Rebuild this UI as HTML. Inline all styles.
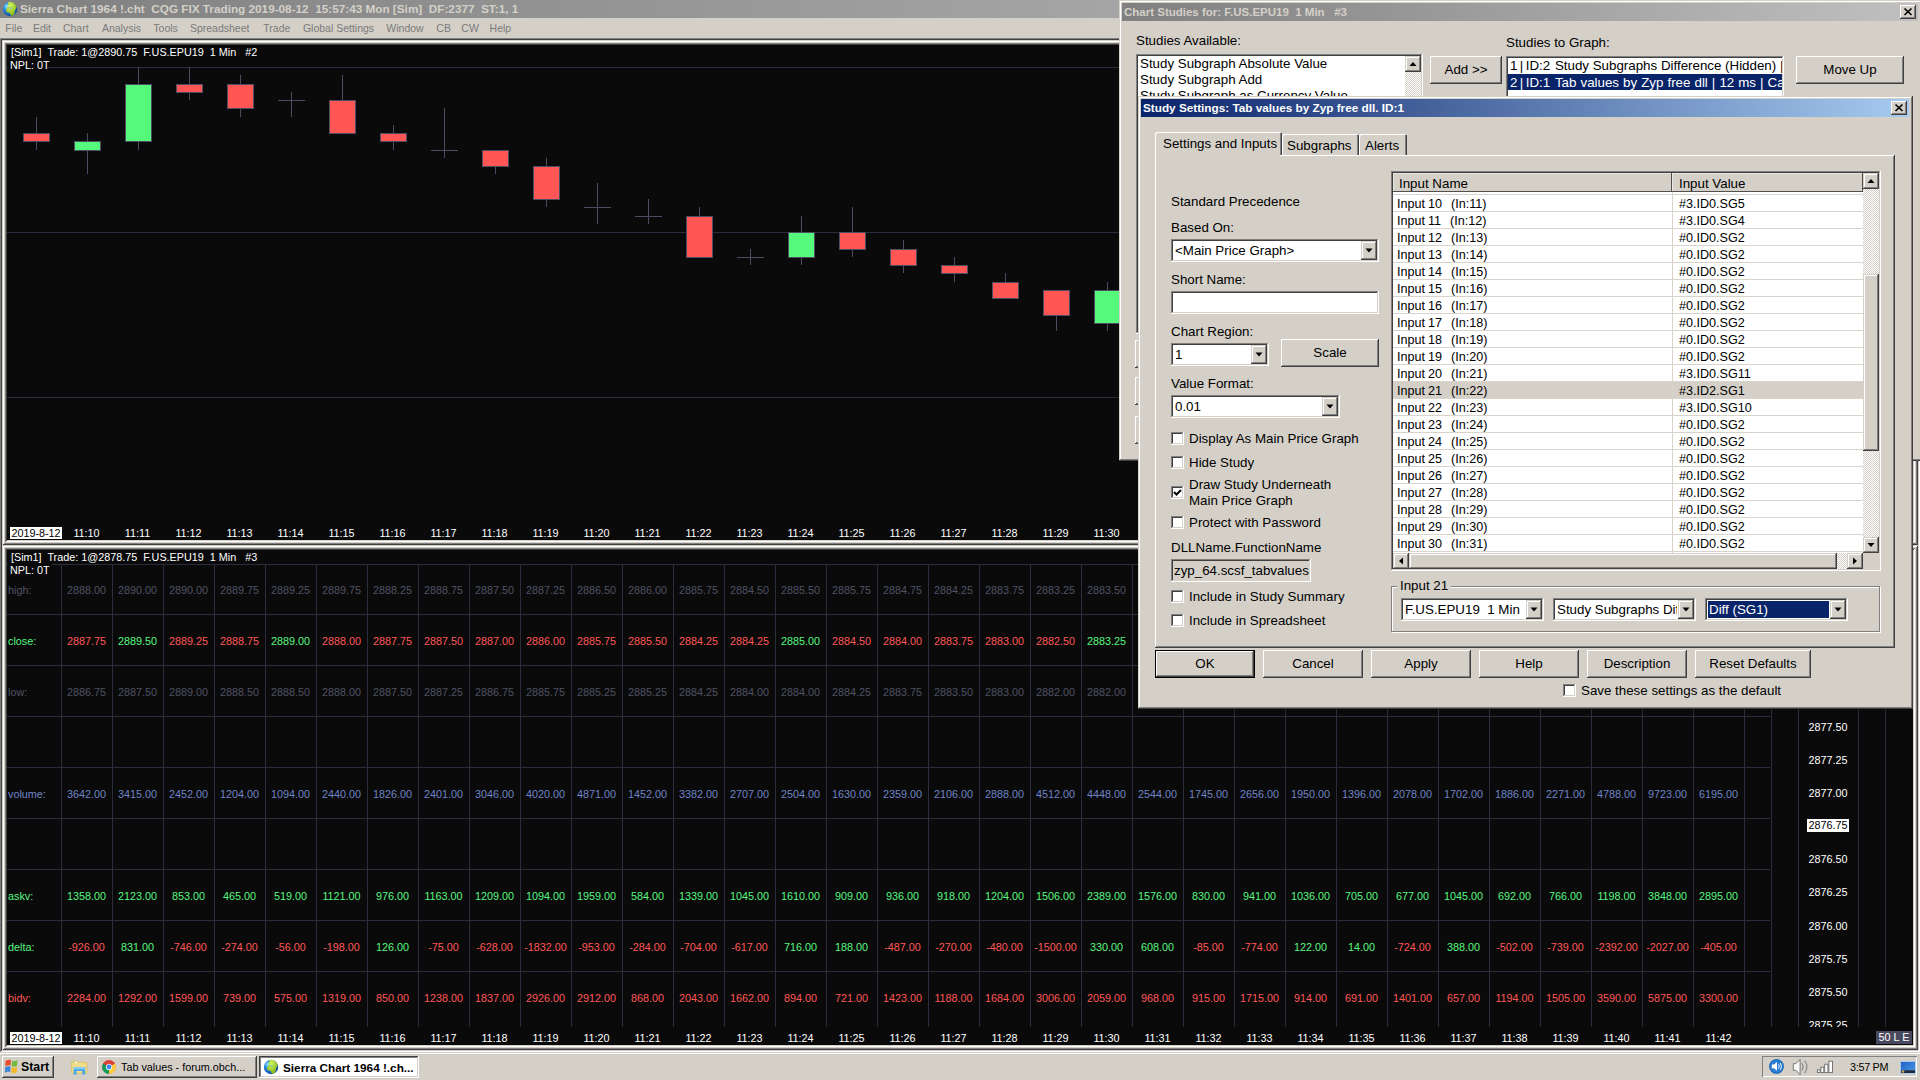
<!DOCTYPE html><html><head><meta charset="utf-8"><title>Sierra Chart</title><style>
*{box-sizing:border-box;margin:0;padding:0}
html,body{width:1920px;height:1080px;overflow:hidden;background:#d4d0c8}
body{position:relative;font-family:"Liberation Sans",sans-serif;font-size:13.33px;color:#000}
.a{position:absolute;white-space:pre;line-height:1}
.t{position:absolute;white-space:pre;font-size:10.8px;line-height:12px;height:12px}
.c{position:absolute;white-space:pre;font-size:10.8px;line-height:12px;height:12px;width:51px;text-align:center}
.d{position:absolute;white-space:pre;font-size:13.33px;line-height:18px;height:17px}
.raised{position:absolute;background:#d4d0c8;box-shadow:inset -1px -1px #404040,inset 1px 1px #fff,inset -2px -2px #808080,inset 2px 2px #d4d0c8}
.sunken{position:absolute;background:#fff;box-shadow:inset -1px -1px #fff,inset 1px 1px #808080,inset -2px -2px #d4d0c8,inset 2px 2px #404040}
.btn{position:absolute;background:#d4d0c8;box-shadow:inset -1px -1px #404040,inset 1px 1px #fff,inset -2px -2px #808080,inset 2px 2px #d4d0c8;text-align:center;font-size:13.33px;white-space:pre}
.win{position:absolute;background:#d4d0c8;box-shadow:inset -1px -1px #404040,inset 1px 1px #d4d0c8,inset -2px -2px #808080,inset 2px 2px #fff}
.cb{position:absolute;width:13px;height:13px;background:#fff;box-shadow:inset -1px -1px #fff,inset 1px 1px #808080,inset -2px -2px #d4d0c8,inset 2px 2px #404040}
.dither{background-image:conic-gradient(#fff 25%,#d4d0c8 0 50%,#fff 0 75%,#d4d0c8 0);background-size:2px 2px}
.g{color:#58f680}.r{color:#ff5858}.k{color:#505264}.v{color:#7084c8}.w{color:#fff}
</style></head><body>
<div class="a" style="left:0;top:0;width:1920px;height:18px;background:linear-gradient(90deg,#808080,#c0c0c0)"></div>
<svg class="a" style="left:2px;top:1px" width="16" height="16" viewBox="0 0 16 16"><defs><radialGradient id="gl" cx="30%" cy="32%" r="75%"><stop offset="0" stop-color="#9fe8ff"/><stop offset=".35" stop-color="#2a8ae0"/><stop offset="1" stop-color="#0a44a0"/></radialGradient><radialGradient id="gg" cx="40%" cy="30%" r="80%"><stop offset="0" stop-color="#d4f860"/><stop offset=".5" stop-color="#a4d030"/><stop offset="1" stop-color="#78a818"/></radialGradient><clipPath id="gc"><circle cx="8" cy="8" r="7.200"/></clipPath></defs><circle cx="8" cy="8" r="7.200" fill="url(#gl)"/><g clip-path="url(#gc)"><path d="M7.400.5L10.900.9 13.800 3.200 14.900 5.900 14 7.300 13 9.800 12.600 12.300 11.300 14.400 9.250 15 8.200 13.600 7.800 11.900 4.900 11.300 3.800 9.400 4.900 7.300 6.300 5.900 5.100 4.800 6.750 2.750 5.500 1.500z" fill="url(#gg)"/><path d="M6.500 6.300l3.300.3.300 1.200-1.300.3-.8-.9-1.300.1z" fill="#5fb8c8" opacity=".8"/></g></svg>
<div class="a" style="left:20px;top:2px;font-weight:bold;font-size:11.75px;line-height:14px;color:#d4d0c8">Sierra Chart 1964 !.cht  CQG FIX Trading 2019-08-12  15:57:43 Mon [Sim]  DF:2377  ST:1, 1</div>
<div class="a" style="left:0;top:18px;width:1920px;height:20px;background:#d4d0c8"></div>
<div class="t" style="left:5.3px;top:22px;color:#7a7a7a;font-size:10.5px">File</div>
<div class="t" style="left:32.9px;top:22px;color:#7a7a7a;font-size:10.5px">Edit</div>
<div class="t" style="left:62.9px;top:22px;color:#7a7a7a;font-size:10.5px">Chart</div>
<div class="t" style="left:101.9px;top:22px;color:#7a7a7a;font-size:10.5px">Analysis</div>
<div class="t" style="left:153.3px;top:22px;color:#7a7a7a;font-size:10.5px">Tools</div>
<div class="t" style="left:189.9px;top:22px;color:#7a7a7a;font-size:10.5px">Spreadsheet</div>
<div class="t" style="left:263.3px;top:22px;color:#7a7a7a;font-size:10.5px">Trade</div>
<div class="t" style="left:302.9px;top:22px;color:#7a7a7a;font-size:10.5px">Global Settings</div>
<div class="t" style="left:386.3px;top:22px;color:#7a7a7a;font-size:10.5px">Window</div>
<div class="t" style="left:436.3px;top:22px;color:#7a7a7a;font-size:10.5px">CB</div>
<div class="t" style="left:461.3px;top:22px;color:#7a7a7a;font-size:10.5px">CW</div>
<div class="t" style="left:489.6px;top:22px;color:#7a7a7a;font-size:10.5px">Help</div>
<div class="a" style="left:0;top:38px;width:1920px;height:1014px;background:#808080;box-shadow:inset 1px 1px #808080,inset -1px -1px #fff,inset 2px 2px #404040,inset -2px -2px #d4d0c8"></div>
<div class="a" style="left:2px;top:40px;width:1916px;height:505px;background:#0a0a0a;box-shadow:inset 1px 1px #d4d0c8,inset -1px -1px #404040,inset 2px 2px #fff,inset -2px -2px #808080,inset 3px 3px #d4d0c8,inset -3px -3px #d4d0c8,inset 4px 4px #808080,inset -4px -4px #fff,inset 5px 5px #404040,inset -5px -5px #d4d0c8"></div>
<svg class="a" style="left:0;top:0" width="1920" height="545" viewBox="0 0 1920 545" shape-rendering="crispEdges"><rect x="7" y="67" width="1906" height="1" fill="#2c2c3c"/><rect x="7" y="232" width="1906" height="1" fill="#2c2c3c"/><rect x="7" y="397" width="1906" height="1" fill="#2c2c3c"/><rect x="8" y="46" width="40" height="26" fill="#0a0a0a"/><rect x="36" y="117" width="1" height="33" fill="#4c4c62"/><rect x="23" y="133" width="27" height="9" fill="#4c4c62"/><rect x="24" y="134" width="25" height="7" fill="#ff5555"/><rect x="87" y="133" width="1" height="41" fill="#4c4c62"/><rect x="74" y="141" width="27" height="10" fill="#4c4c62"/><rect x="75" y="142" width="25" height="8" fill="#55f97c"/><rect x="138" y="67" width="1" height="83" fill="#4c4c62"/><rect x="125" y="84" width="27" height="58" fill="#4c4c62"/><rect x="126" y="85" width="25" height="56" fill="#55f97c"/><rect x="189" y="67" width="1" height="33" fill="#4c4c62"/><rect x="176" y="84" width="27" height="9" fill="#4c4c62"/><rect x="177" y="85" width="25" height="7" fill="#ff5555"/><rect x="240" y="75" width="1" height="42" fill="#4c4c62"/><rect x="227" y="84" width="27" height="25" fill="#4c4c62"/><rect x="228" y="85" width="25" height="23" fill="#ff5555"/><rect x="291" y="92" width="1" height="25" fill="#4c4c62"/><rect x="278" y="100" width="27" height="1" fill="#4c4c62"/><rect x="342" y="75" width="1" height="58" fill="#4c4c62"/><rect x="329" y="100" width="27" height="34" fill="#4c4c62"/><rect x="330" y="101" width="25" height="32" fill="#ff5555"/><rect x="393" y="125" width="1" height="25" fill="#4c4c62"/><rect x="380" y="133" width="27" height="9" fill="#4c4c62"/><rect x="381" y="134" width="25" height="7" fill="#ff5555"/><rect x="444" y="108" width="1" height="50" fill="#4c4c62"/><rect x="431" y="150" width="27" height="1" fill="#4c4c62"/><rect x="495" y="150" width="1" height="24" fill="#4c4c62"/><rect x="482" y="150" width="27" height="17" fill="#4c4c62"/><rect x="483" y="151" width="25" height="15" fill="#ff5555"/><rect x="546" y="158" width="1" height="49" fill="#4c4c62"/><rect x="533" y="166" width="27" height="34" fill="#4c4c62"/><rect x="534" y="167" width="25" height="32" fill="#ff5555"/><rect x="597" y="183" width="1" height="41" fill="#4c4c62"/><rect x="584" y="207" width="27" height="1" fill="#4c4c62"/><rect x="648" y="199" width="1" height="25" fill="#4c4c62"/><rect x="635" y="216" width="27" height="1" fill="#4c4c62"/><rect x="699" y="207" width="1" height="50" fill="#4c4c62"/><rect x="686" y="216" width="27" height="42" fill="#4c4c62"/><rect x="687" y="217" width="25" height="40" fill="#ff5555"/><rect x="750" y="249" width="1" height="16" fill="#4c4c62"/><rect x="737" y="257" width="27" height="1" fill="#4c4c62"/><rect x="801" y="216" width="1" height="49" fill="#4c4c62"/><rect x="788" y="232" width="27" height="26" fill="#4c4c62"/><rect x="789" y="233" width="25" height="24" fill="#55f97c"/><rect x="852" y="207" width="1" height="50" fill="#4c4c62"/><rect x="839" y="232" width="27" height="18" fill="#4c4c62"/><rect x="840" y="233" width="25" height="16" fill="#ff5555"/><rect x="903" y="240" width="1" height="33" fill="#4c4c62"/><rect x="890" y="249" width="27" height="17" fill="#4c4c62"/><rect x="891" y="250" width="25" height="15" fill="#ff5555"/><rect x="954" y="257" width="1" height="25" fill="#4c4c62"/><rect x="941" y="265" width="27" height="9" fill="#4c4c62"/><rect x="942" y="266" width="25" height="7" fill="#ff5555"/><rect x="1005" y="273" width="1" height="25" fill="#4c4c62"/><rect x="992" y="282" width="27" height="17" fill="#4c4c62"/><rect x="993" y="283" width="25" height="15" fill="#ff5555"/><rect x="1056" y="290" width="1" height="41" fill="#4c4c62"/><rect x="1043" y="290" width="27" height="26" fill="#4c4c62"/><rect x="1044" y="291" width="25" height="24" fill="#ff5555"/><rect x="1107" y="282" width="1" height="49" fill="#4c4c62"/><rect x="1094" y="290" width="27" height="34" fill="#4c4c62"/><rect x="1095" y="291" width="25" height="32" fill="#55f97c"/></svg>
<div class="t w" style="left:11px;top:46px">[Sim1]  Trade: 1@2890.75  F.US.EPU19  1 Min   #2</div>
<div class="t w" style="left:10px;top:59px">NPL: 0T</div>
<div class="t" style="left:10px;top:527px;width:52px;height:12px;background:#fff;color:#000;text-align:center;line-height:12px">2019-8-12</div>
<div class="c w" style="left:61px;top:527px">11:10</div>
<div class="c w" style="left:112px;top:527px">11:11</div>
<div class="c w" style="left:163px;top:527px">11:12</div>
<div class="c w" style="left:214px;top:527px">11:13</div>
<div class="c w" style="left:265px;top:527px">11:14</div>
<div class="c w" style="left:316px;top:527px">11:15</div>
<div class="c w" style="left:367px;top:527px">11:16</div>
<div class="c w" style="left:418px;top:527px">11:17</div>
<div class="c w" style="left:469px;top:527px">11:18</div>
<div class="c w" style="left:520px;top:527px">11:19</div>
<div class="c w" style="left:571px;top:527px">11:20</div>
<div class="c w" style="left:622px;top:527px">11:21</div>
<div class="c w" style="left:673px;top:527px">11:22</div>
<div class="c w" style="left:724px;top:527px">11:23</div>
<div class="c w" style="left:775px;top:527px">11:24</div>
<div class="c w" style="left:826px;top:527px">11:25</div>
<div class="c w" style="left:877px;top:527px">11:26</div>
<div class="c w" style="left:928px;top:527px">11:27</div>
<div class="c w" style="left:979px;top:527px">11:28</div>
<div class="c w" style="left:1030px;top:527px">11:29</div>
<div class="c w" style="left:1081px;top:527px">11:30</div>
<div class="a" style="left:2px;top:545px;width:1916px;height:505px;background:#0a0a0a;box-shadow:inset 1px 1px #d4d0c8,inset -1px -1px #404040,inset 2px 2px #fff,inset -2px -2px #808080,inset 3px 3px #d4d0c8,inset -3px -3px #d4d0c8,inset 4px 4px #808080,inset -4px -4px #fff,inset 5px 5px #404040,inset -5px -5px #d4d0c8"></div>
<svg class="a" style="left:0;top:545px" width="1920" height="506" viewBox="0 545 1920 506" shape-rendering="crispEdges"><rect x="7" y="564" width="1763" height="1" fill="#2c2c3c"/><rect x="7" y="614" width="1763" height="1" fill="#2c2c3c"/><rect x="7" y="665" width="1763" height="1" fill="#2c2c3c"/><rect x="7" y="716" width="1763" height="1" fill="#2c2c3c"/><rect x="7" y="767" width="1763" height="1" fill="#2c2c3c"/><rect x="7" y="818" width="1763" height="1" fill="#2c2c3c"/><rect x="7" y="869" width="1763" height="1" fill="#2c2c3c"/><rect x="7" y="920" width="1763" height="1" fill="#2c2c3c"/><rect x="7" y="971" width="1763" height="1" fill="#2c2c3c"/><rect x="61" y="564" width="1" height="463" fill="#2c2c3c"/><rect x="112" y="564" width="1" height="463" fill="#2c2c3c"/><rect x="163" y="564" width="1" height="463" fill="#2c2c3c"/><rect x="214" y="564" width="1" height="463" fill="#2c2c3c"/><rect x="265" y="564" width="1" height="463" fill="#2c2c3c"/><rect x="316" y="564" width="1" height="463" fill="#2c2c3c"/><rect x="367" y="564" width="1" height="463" fill="#2c2c3c"/><rect x="418" y="564" width="1" height="463" fill="#2c2c3c"/><rect x="469" y="564" width="1" height="463" fill="#2c2c3c"/><rect x="520" y="564" width="1" height="463" fill="#2c2c3c"/><rect x="571" y="564" width="1" height="463" fill="#2c2c3c"/><rect x="622" y="564" width="1" height="463" fill="#2c2c3c"/><rect x="673" y="564" width="1" height="463" fill="#2c2c3c"/><rect x="724" y="564" width="1" height="463" fill="#2c2c3c"/><rect x="775" y="564" width="1" height="463" fill="#2c2c3c"/><rect x="826" y="564" width="1" height="463" fill="#2c2c3c"/><rect x="877" y="564" width="1" height="463" fill="#2c2c3c"/><rect x="928" y="564" width="1" height="463" fill="#2c2c3c"/><rect x="979" y="564" width="1" height="463" fill="#2c2c3c"/><rect x="1030" y="564" width="1" height="463" fill="#2c2c3c"/><rect x="1081" y="564" width="1" height="463" fill="#2c2c3c"/><rect x="1132" y="564" width="1" height="463" fill="#2c2c3c"/><rect x="1183" y="564" width="1" height="463" fill="#2c2c3c"/><rect x="1234" y="564" width="1" height="463" fill="#2c2c3c"/><rect x="1285" y="564" width="1" height="463" fill="#2c2c3c"/><rect x="1336" y="564" width="1" height="463" fill="#2c2c3c"/><rect x="1387" y="564" width="1" height="463" fill="#2c2c3c"/><rect x="1438" y="564" width="1" height="463" fill="#2c2c3c"/><rect x="1489" y="564" width="1" height="463" fill="#2c2c3c"/><rect x="1540" y="564" width="1" height="463" fill="#2c2c3c"/><rect x="1591" y="564" width="1" height="463" fill="#2c2c3c"/><rect x="1642" y="564" width="1" height="463" fill="#2c2c3c"/><rect x="1693" y="564" width="1" height="463" fill="#2c2c3c"/><rect x="1744" y="564" width="1" height="463" fill="#2c2c3c"/><rect x="1771" y="564" width="1" height="463" fill="#2c2c3c"/><rect x="1798" y="564" width="1" height="463" fill="#2c2c3c"/><rect x="1858" y="564" width="1" height="463" fill="#2c2c3c"/><rect x="1885" y="564" width="1" height="463" fill="#2c2c3c"/><rect x="8" y="552" width="44" height="26" fill="#0a0a0a"/></svg>
<div class="t w" style="left:11px;top:551px">[Sim1]  Trade: 1@2878.75  F.US.EPU19  1 Min   #3</div>
<div class="t w" style="left:10px;top:564px">NPL: 0T</div>
<div class="t k" style="left:8px;top:584px">high:</div>
<div class="t g" style="left:8px;top:635px">close:</div>
<div class="t k" style="left:8px;top:686px">low:</div>
<div class="t v" style="left:8px;top:788px">volume:</div>
<div class="t g" style="left:8px;top:890px">askv:</div>
<div class="t g" style="left:8px;top:941px">delta:</div>
<div class="t r" style="left:8px;top:992px">bidv:</div>
<div class="c k" style="left:61px;top:584px">2888.00</div>
<div class="c k" style="left:112px;top:584px">2890.00</div>
<div class="c k" style="left:163px;top:584px">2890.00</div>
<div class="c k" style="left:214px;top:584px">2889.75</div>
<div class="c k" style="left:265px;top:584px">2889.25</div>
<div class="c k" style="left:316px;top:584px">2889.75</div>
<div class="c k" style="left:367px;top:584px">2888.25</div>
<div class="c k" style="left:418px;top:584px">2888.75</div>
<div class="c k" style="left:469px;top:584px">2887.50</div>
<div class="c k" style="left:520px;top:584px">2887.25</div>
<div class="c k" style="left:571px;top:584px">2886.50</div>
<div class="c k" style="left:622px;top:584px">2886.00</div>
<div class="c k" style="left:673px;top:584px">2885.75</div>
<div class="c k" style="left:724px;top:584px">2884.50</div>
<div class="c k" style="left:775px;top:584px">2885.50</div>
<div class="c k" style="left:826px;top:584px">2885.75</div>
<div class="c k" style="left:877px;top:584px">2884.75</div>
<div class="c k" style="left:928px;top:584px">2884.25</div>
<div class="c k" style="left:979px;top:584px">2883.75</div>
<div class="c k" style="left:1030px;top:584px">2883.25</div>
<div class="c k" style="left:1081px;top:584px">2883.50</div>
<div class="c r" style="left:61px;top:635px">2887.75</div>
<div class="c g" style="left:112px;top:635px">2889.50</div>
<div class="c r" style="left:163px;top:635px">2889.25</div>
<div class="c r" style="left:214px;top:635px">2888.75</div>
<div class="c g" style="left:265px;top:635px">2889.00</div>
<div class="c r" style="left:316px;top:635px">2888.00</div>
<div class="c r" style="left:367px;top:635px">2887.75</div>
<div class="c r" style="left:418px;top:635px">2887.50</div>
<div class="c r" style="left:469px;top:635px">2887.00</div>
<div class="c r" style="left:520px;top:635px">2886.00</div>
<div class="c r" style="left:571px;top:635px">2885.75</div>
<div class="c r" style="left:622px;top:635px">2885.50</div>
<div class="c r" style="left:673px;top:635px">2884.25</div>
<div class="c r" style="left:724px;top:635px">2884.25</div>
<div class="c g" style="left:775px;top:635px">2885.00</div>
<div class="c r" style="left:826px;top:635px">2884.50</div>
<div class="c r" style="left:877px;top:635px">2884.00</div>
<div class="c r" style="left:928px;top:635px">2883.75</div>
<div class="c r" style="left:979px;top:635px">2883.00</div>
<div class="c r" style="left:1030px;top:635px">2882.50</div>
<div class="c g" style="left:1081px;top:635px">2883.25</div>
<div class="c k" style="left:61px;top:686px">2886.75</div>
<div class="c k" style="left:112px;top:686px">2887.50</div>
<div class="c k" style="left:163px;top:686px">2889.00</div>
<div class="c k" style="left:214px;top:686px">2888.50</div>
<div class="c k" style="left:265px;top:686px">2888.50</div>
<div class="c k" style="left:316px;top:686px">2888.00</div>
<div class="c k" style="left:367px;top:686px">2887.50</div>
<div class="c k" style="left:418px;top:686px">2887.25</div>
<div class="c k" style="left:469px;top:686px">2886.75</div>
<div class="c k" style="left:520px;top:686px">2885.75</div>
<div class="c k" style="left:571px;top:686px">2885.25</div>
<div class="c k" style="left:622px;top:686px">2885.25</div>
<div class="c k" style="left:673px;top:686px">2884.25</div>
<div class="c k" style="left:724px;top:686px">2884.00</div>
<div class="c k" style="left:775px;top:686px">2884.00</div>
<div class="c k" style="left:826px;top:686px">2884.25</div>
<div class="c k" style="left:877px;top:686px">2883.75</div>
<div class="c k" style="left:928px;top:686px">2883.50</div>
<div class="c k" style="left:979px;top:686px">2883.00</div>
<div class="c k" style="left:1030px;top:686px">2882.00</div>
<div class="c k" style="left:1081px;top:686px">2882.00</div>
<div class="c v" style="left:61px;top:788px">3642.00</div>
<div class="c v" style="left:112px;top:788px">3415.00</div>
<div class="c v" style="left:163px;top:788px">2452.00</div>
<div class="c v" style="left:214px;top:788px">1204.00</div>
<div class="c v" style="left:265px;top:788px">1094.00</div>
<div class="c v" style="left:316px;top:788px">2440.00</div>
<div class="c v" style="left:367px;top:788px">1826.00</div>
<div class="c v" style="left:418px;top:788px">2401.00</div>
<div class="c v" style="left:469px;top:788px">3046.00</div>
<div class="c v" style="left:520px;top:788px">4020.00</div>
<div class="c v" style="left:571px;top:788px">4871.00</div>
<div class="c v" style="left:622px;top:788px">1452.00</div>
<div class="c v" style="left:673px;top:788px">3382.00</div>
<div class="c v" style="left:724px;top:788px">2707.00</div>
<div class="c v" style="left:775px;top:788px">2504.00</div>
<div class="c v" style="left:826px;top:788px">1630.00</div>
<div class="c v" style="left:877px;top:788px">2359.00</div>
<div class="c v" style="left:928px;top:788px">2106.00</div>
<div class="c v" style="left:979px;top:788px">2888.00</div>
<div class="c v" style="left:1030px;top:788px">4512.00</div>
<div class="c v" style="left:1081px;top:788px">4448.00</div>
<div class="c v" style="left:1132px;top:788px">2544.00</div>
<div class="c v" style="left:1183px;top:788px">1745.00</div>
<div class="c v" style="left:1234px;top:788px">2656.00</div>
<div class="c v" style="left:1285px;top:788px">1950.00</div>
<div class="c v" style="left:1336px;top:788px">1396.00</div>
<div class="c v" style="left:1387px;top:788px">2078.00</div>
<div class="c v" style="left:1438px;top:788px">1702.00</div>
<div class="c v" style="left:1489px;top:788px">1886.00</div>
<div class="c v" style="left:1540px;top:788px">2271.00</div>
<div class="c v" style="left:1591px;top:788px">4788.00</div>
<div class="c v" style="left:1642px;top:788px">9723.00</div>
<div class="c v" style="left:1693px;top:788px">6195.00</div>
<div class="c g" style="left:61px;top:890px">1358.00</div>
<div class="c r" style="left:61px;top:941px">-926.00</div>
<div class="c r" style="left:61px;top:992px">2284.00</div>
<div class="c g" style="left:112px;top:890px">2123.00</div>
<div class="c g" style="left:112px;top:941px">831.00</div>
<div class="c r" style="left:112px;top:992px">1292.00</div>
<div class="c g" style="left:163px;top:890px">853.00</div>
<div class="c r" style="left:163px;top:941px">-746.00</div>
<div class="c r" style="left:163px;top:992px">1599.00</div>
<div class="c g" style="left:214px;top:890px">465.00</div>
<div class="c r" style="left:214px;top:941px">-274.00</div>
<div class="c r" style="left:214px;top:992px">739.00</div>
<div class="c g" style="left:265px;top:890px">519.00</div>
<div class="c r" style="left:265px;top:941px">-56.00</div>
<div class="c r" style="left:265px;top:992px">575.00</div>
<div class="c g" style="left:316px;top:890px">1121.00</div>
<div class="c r" style="left:316px;top:941px">-198.00</div>
<div class="c r" style="left:316px;top:992px">1319.00</div>
<div class="c g" style="left:367px;top:890px">976.00</div>
<div class="c g" style="left:367px;top:941px">126.00</div>
<div class="c r" style="left:367px;top:992px">850.00</div>
<div class="c g" style="left:418px;top:890px">1163.00</div>
<div class="c r" style="left:418px;top:941px">-75.00</div>
<div class="c r" style="left:418px;top:992px">1238.00</div>
<div class="c g" style="left:469px;top:890px">1209.00</div>
<div class="c r" style="left:469px;top:941px">-628.00</div>
<div class="c r" style="left:469px;top:992px">1837.00</div>
<div class="c g" style="left:520px;top:890px">1094.00</div>
<div class="c r" style="left:520px;top:941px">-1832.00</div>
<div class="c r" style="left:520px;top:992px">2926.00</div>
<div class="c g" style="left:571px;top:890px">1959.00</div>
<div class="c r" style="left:571px;top:941px">-953.00</div>
<div class="c r" style="left:571px;top:992px">2912.00</div>
<div class="c g" style="left:622px;top:890px">584.00</div>
<div class="c r" style="left:622px;top:941px">-284.00</div>
<div class="c r" style="left:622px;top:992px">868.00</div>
<div class="c g" style="left:673px;top:890px">1339.00</div>
<div class="c r" style="left:673px;top:941px">-704.00</div>
<div class="c r" style="left:673px;top:992px">2043.00</div>
<div class="c g" style="left:724px;top:890px">1045.00</div>
<div class="c r" style="left:724px;top:941px">-617.00</div>
<div class="c r" style="left:724px;top:992px">1662.00</div>
<div class="c g" style="left:775px;top:890px">1610.00</div>
<div class="c g" style="left:775px;top:941px">716.00</div>
<div class="c r" style="left:775px;top:992px">894.00</div>
<div class="c g" style="left:826px;top:890px">909.00</div>
<div class="c g" style="left:826px;top:941px">188.00</div>
<div class="c r" style="left:826px;top:992px">721.00</div>
<div class="c g" style="left:877px;top:890px">936.00</div>
<div class="c r" style="left:877px;top:941px">-487.00</div>
<div class="c r" style="left:877px;top:992px">1423.00</div>
<div class="c g" style="left:928px;top:890px">918.00</div>
<div class="c r" style="left:928px;top:941px">-270.00</div>
<div class="c r" style="left:928px;top:992px">1188.00</div>
<div class="c g" style="left:979px;top:890px">1204.00</div>
<div class="c r" style="left:979px;top:941px">-480.00</div>
<div class="c r" style="left:979px;top:992px">1684.00</div>
<div class="c g" style="left:1030px;top:890px">1506.00</div>
<div class="c r" style="left:1030px;top:941px">-1500.00</div>
<div class="c r" style="left:1030px;top:992px">3006.00</div>
<div class="c g" style="left:1081px;top:890px">2389.00</div>
<div class="c g" style="left:1081px;top:941px">330.00</div>
<div class="c r" style="left:1081px;top:992px">2059.00</div>
<div class="c g" style="left:1132px;top:890px">1576.00</div>
<div class="c g" style="left:1132px;top:941px">608.00</div>
<div class="c r" style="left:1132px;top:992px">968.00</div>
<div class="c g" style="left:1183px;top:890px">830.00</div>
<div class="c r" style="left:1183px;top:941px">-85.00</div>
<div class="c r" style="left:1183px;top:992px">915.00</div>
<div class="c g" style="left:1234px;top:890px">941.00</div>
<div class="c r" style="left:1234px;top:941px">-774.00</div>
<div class="c r" style="left:1234px;top:992px">1715.00</div>
<div class="c g" style="left:1285px;top:890px">1036.00</div>
<div class="c g" style="left:1285px;top:941px">122.00</div>
<div class="c r" style="left:1285px;top:992px">914.00</div>
<div class="c g" style="left:1336px;top:890px">705.00</div>
<div class="c g" style="left:1336px;top:941px">14.00</div>
<div class="c r" style="left:1336px;top:992px">691.00</div>
<div class="c g" style="left:1387px;top:890px">677.00</div>
<div class="c r" style="left:1387px;top:941px">-724.00</div>
<div class="c r" style="left:1387px;top:992px">1401.00</div>
<div class="c g" style="left:1438px;top:890px">1045.00</div>
<div class="c g" style="left:1438px;top:941px">388.00</div>
<div class="c r" style="left:1438px;top:992px">657.00</div>
<div class="c g" style="left:1489px;top:890px">692.00</div>
<div class="c r" style="left:1489px;top:941px">-502.00</div>
<div class="c r" style="left:1489px;top:992px">1194.00</div>
<div class="c g" style="left:1540px;top:890px">766.00</div>
<div class="c r" style="left:1540px;top:941px">-739.00</div>
<div class="c r" style="left:1540px;top:992px">1505.00</div>
<div class="c g" style="left:1591px;top:890px">1198.00</div>
<div class="c r" style="left:1591px;top:941px">-2392.00</div>
<div class="c r" style="left:1591px;top:992px">3590.00</div>
<div class="c g" style="left:1642px;top:890px">3848.00</div>
<div class="c r" style="left:1642px;top:941px">-2027.00</div>
<div class="c r" style="left:1642px;top:992px">5875.00</div>
<div class="c g" style="left:1693px;top:890px">2895.00</div>
<div class="c r" style="left:1693px;top:941px">-405.00</div>
<div class="c r" style="left:1693px;top:992px">3300.00</div>
<div class="t" style="left:10px;top:1032px;width:52px;height:12px;background:#fff;color:#000;text-align:center;line-height:12px">2019-8-12</div>
<div class="c w" style="left:61px;top:1032px">11:10</div>
<div class="c w" style="left:112px;top:1032px">11:11</div>
<div class="c w" style="left:163px;top:1032px">11:12</div>
<div class="c w" style="left:214px;top:1032px">11:13</div>
<div class="c w" style="left:265px;top:1032px">11:14</div>
<div class="c w" style="left:316px;top:1032px">11:15</div>
<div class="c w" style="left:367px;top:1032px">11:16</div>
<div class="c w" style="left:418px;top:1032px">11:17</div>
<div class="c w" style="left:469px;top:1032px">11:18</div>
<div class="c w" style="left:520px;top:1032px">11:19</div>
<div class="c w" style="left:571px;top:1032px">11:20</div>
<div class="c w" style="left:622px;top:1032px">11:21</div>
<div class="c w" style="left:673px;top:1032px">11:22</div>
<div class="c w" style="left:724px;top:1032px">11:23</div>
<div class="c w" style="left:775px;top:1032px">11:24</div>
<div class="c w" style="left:826px;top:1032px">11:25</div>
<div class="c w" style="left:877px;top:1032px">11:26</div>
<div class="c w" style="left:928px;top:1032px">11:27</div>
<div class="c w" style="left:979px;top:1032px">11:28</div>
<div class="c w" style="left:1030px;top:1032px">11:29</div>
<div class="c w" style="left:1081px;top:1032px">11:30</div>
<div class="c w" style="left:1132px;top:1032px">11:31</div>
<div class="c w" style="left:1183px;top:1032px">11:32</div>
<div class="c w" style="left:1234px;top:1032px">11:33</div>
<div class="c w" style="left:1285px;top:1032px">11:34</div>
<div class="c w" style="left:1336px;top:1032px">11:35</div>
<div class="c w" style="left:1387px;top:1032px">11:36</div>
<div class="c w" style="left:1438px;top:1032px">11:37</div>
<div class="c w" style="left:1489px;top:1032px">11:38</div>
<div class="c w" style="left:1540px;top:1032px">11:39</div>
<div class="c w" style="left:1591px;top:1032px">11:40</div>
<div class="c w" style="left:1642px;top:1032px">11:41</div>
<div class="c w" style="left:1693px;top:1032px">11:42</div>
<div class="a" style="left:1800px;top:700px;width:58px;height:327px;overflow:hidden">
<div class="t w" style="left:7px;top:-12px;width:42px;text-align:center">2877.75</div>
<div class="t w" style="left:7px;top:21px;width:42px;text-align:center">2877.50</div>
<div class="t w" style="left:7px;top:54px;width:42px;text-align:center">2877.25</div>
<div class="t w" style="left:7px;top:87px;width:42px;text-align:center">2877.00</div>
<div class="t" style="left:7px;top:119px;width:42px;height:13px;line-height:13px;background:#fff;color:#000;text-align:center">2876.75</div>
<div class="t w" style="left:7px;top:153px;width:42px;text-align:center">2876.50</div>
<div class="t w" style="left:7px;top:186px;width:42px;text-align:center">2876.25</div>
<div class="t w" style="left:7px;top:220px;width:42px;text-align:center">2876.00</div>
<div class="t w" style="left:7px;top:253px;width:42px;text-align:center">2875.75</div>
<div class="t w" style="left:7px;top:286px;width:42px;text-align:center">2875.50</div>
<div class="t w" style="left:7px;top:319px;width:42px;text-align:center">2875.25</div>
</div>
<div class="t w" style="left:1876px;top:1031px;width:36px;height:13px;line-height:13px;background:#48485e;text-align:center">50 L E</div>
<div class="a" style="left:0;top:1052px;width:1920px;height:28px;background:#d4d0c8;border-top:1px solid #d4d0c8;box-shadow:inset 0 1px #fff"></div>
<div class="raised" style="left:2px;top:1056px;width:52px;height:22px"></div>
<svg class="a" style="left:4px;top:1058px" width="17" height="16" viewBox="0 0 17 16"><g transform="rotate(-8 8 8)"><path d="M2.300 2.200c1.800-1.100 3.700-1.100 5.400 0l-1 5.300c-1.800-1.100-3.600-1.100-5.400 0z" fill="#e8502c"/><path d="M8.700 2.800c1.800 1.100 3.700 1.100 5.500 0l-1 5.300c-1.800 1.100-3.700 1.100-5.500 0z" fill="#74b83e"/><path d="M1 8.600c1.800-1.100 3.700-1.100 5.400 0l-1 5.300c-1.800-1.100-3.600-1.100-5.400 0z" fill="#3f86dc"/><path d="M7.400 9.200c1.800 1.100 3.700 1.100 5.500 0l-1 5.300c-1.800 1.100-3.700 1.100-5.500 0z" fill="#f4b824"/></g></svg>
<div class="a" style="left:21px;top:1060px;font-weight:bold;font-size:12.3px;line-height:15px">Start</div>
<svg class="a" style="left:71px;top:1060px" width="17" height="16" viewBox="0 0 17 16"><path d="M.6 2.300Q.6 1.200 1.700 1.200H6.500L7.600 2.300H15.200Q16 2.300 16 3.100V12.500Q16 13.300 15.200 13.300H1.400Q.6 13.300.6 12.500z" fill="#f3dc8a" stroke="#d9b84e" stroke-width=".7"/><rect x="2" y="1.900" width="4" height=".9" fill="#fff"/><rect x="2" y="1.900" width="1.200" height=".9" fill="#4fc03a"/><path d="M2.600 7.200H14.200V14.600H11.300V10.900H5.600V14.600H2.600z" fill="#4aa8e8"/><path d="M2.600 7.200H14.200V9.200H2.600z" fill="#8ad0f6"/></svg>
<div class="raised" style="left:97px;top:1056px;width:160px;height:22px"></div>
<svg class="a" style="left:102px;top:1060px" width="14" height="14" viewBox="0 0 14 14"><circle cx="7" cy="7" r="6.800" fill="#db4437"/><path d="M7 7L1.100 3.600A6.800 6.800 0 0 0 7 13.800z" fill="#0f9d58"/><path d="M7 7L7 13.800A6.800 6.800 0 0 0 12.900 3.600z" fill="#ffcd40"/><path d="M7 7L12.900 3.600A6.800 6.800 0 0 0 1.100 3.600z" fill="#db4437"/><circle cx="7" cy="7" r="3.100" fill="#fff"/><circle cx="7" cy="7" r="2.400" fill="#4285f4"/></svg>
<div class="t" style="left:121px;top:1061px">Tab values - forum.obch...</div>
<div class="a" style="left:259px;top:1056px;width:160px;height:22px;background:#fff;box-shadow:inset -1px -1px #fff,inset 1px 1px #404040,inset -2px -2px #d4d0c8,inset 2px 2px #808080"></div>
<svg class="a" style="left:263px;top:1059px" width="16" height="16" viewBox="0 0 16 16"><circle cx="8" cy="8" r="7.200" fill="url(#gl)"/><g clip-path="url(#gc)"><path d="M7.400.5L10.900.9 13.800 3.200 14.900 5.900 14 7.300 13 9.800 12.600 12.300 11.300 14.400 9.250 15 8.200 13.600 7.800 11.900 4.900 11.300 3.800 9.400 4.900 7.300 6.300 5.900 5.100 4.800 6.750 2.750 5.500 1.500z" fill="url(#gg)"/><path d="M6.500 6.300l3.300.3.300 1.200-1.300.3-.8-.9-1.300.1z" fill="#5fb8c8" opacity=".8"/></g></svg>
<div class="a" style="left:283px;top:1061px;font-weight:bold;font-size:11.75px;line-height:14px">Sierra Chart 1964 !.ch...</div>
<div class="a" style="left:1762px;top:1056px;width:155px;height:21px;box-shadow:inset 1px 1px #808080,inset -1px -1px #fff"></div>
<svg class="a" style="left:1768px;top:1058px" width="70" height="18" viewBox="0 0 70 18"><circle cx="8.500" cy="8.400" r="7.400" fill="#1a66b8"/><circle cx="8.500" cy="8.400" r="6.300" fill="#2b7fd4"/><path d="M3.800 6.600h2.200l3-2.600v8.800l-3-2.600H3.800z" fill="#fff"/><path d="M10.600 6.400q1.300 2 0 4M12.300 5q2.500 3.400 0 6.800" stroke="#fff" stroke-width="1" fill="none"/><path d="M25.300 5.700h2.600l4.200-4.300v15.200l-4.200-4.300h-2.600z" fill="#fafafa" stroke="#6a6a6a" stroke-width=".9"/><path d="M33.800 5q2.300 3.700 0 7.500M36.600 2.500q4.600 6.300 0 12.600" stroke="#8a8a8a" stroke-width="1.200" fill="none"/><g fill="#fff" stroke="#6a6a6a" stroke-width=".9"><rect x="49.400" y="11.800" width="2.700" height="2.700"/><rect x="52.900" y="9.200" width="2.900" height="5.300"/><rect x="56.700" y="6.200" width="3.200" height="8.300"/><rect x="60.900" y="3.200" width="3.600" height="11.300"/></g></svg>
<div class="t" style="left:1850px;top:1061px;letter-spacing:-.28px">3:57 PM</div>
<svg class="a" style="left:1900px;top:1061px" width="16" height="13" viewBox="0 0 16 13"><defs><linearGradient id="mg" x1="0" y1="0" x2="1" y2="1"><stop offset="0" stop-color="#1d5fc4"/><stop offset="1" stop-color="#4f9be8"/></linearGradient></defs><rect x=".5" y=".5" width="15" height="12" fill="url(#mg)" stroke="#a8c8ee"/><rect x="1" y="9.300" width="14" height="2.700" fill="#222a3a"/><circle cx="3" cy="10.500" r="1.300" fill="#e8a030"/><circle cx="2.600" cy="10.100" r=".6" fill="#5fb0f0"/></svg>
<div class="win" style="left:1119px;top:0;width:803px;height:461px"></div>
<div class="a" style="left:1122px;top:3px;width:796px;height:18px;background:linear-gradient(90deg,#808080,#c0c0c0)"></div>
<div class="a" style="left:1124px;top:5px;font-weight:bold;font-size:11.5px;line-height:14px;color:#d4d0c8">Chart Studies for: F.US.EPU19  1 Min   #3</div>
<div class="raised" style="left:1900px;top:5px;width:16px;height:14px"></div>
<svg class="a" style="left:1900px;top:5px" width="16" height="14"><path d="M4.500 3.500l7 6.500M11.500 3.500l-7 6.500" stroke="#000" stroke-width="1.700" fill="none"/></svg>
<div class="d" style="left:1136px;top:32px">Studies Available:</div>
<div class="sunken" style="left:1136px;top:54px;width:287px;height:280px"></div>
<div class="d" style="left:1140px;top:55px">Study Subgraph Absolute Value</div>
<div class="d" style="left:1140px;top:71px">Study Subgraph Add</div>
<div class="d" style="left:1140px;top:87px">Study Subgraph as Currency Value</div>
<div class="a dither" style="left:1405px;top:56px;width:16px;height:276px"></div>
<div class="win" style="left:1405px;top:56px;width:16px;height:16px"></div>
<svg class="a" style="left:1405px;top:56px" width="16" height="16"><polygon points="4.5,10.0 11.5,10.0 8.0,6.0" fill="#000"/></svg>
<div class="btn" style="left:1430px;top:56px;width:72px;height:28px;line-height:27px">Add &gt;&gt;</div>
<div class="d" style="left:1506px;top:34px">Studies to Graph:</div>
<div class="sunken" style="left:1506px;top:56px;width:278px;height:200px"></div>
<div class="d" style="left:1510px;top:57px;width:272px;overflow:hidden"><span style="word-spacing:-1.3px">1 | ID:2  </span>Study Subgraphs Difference (Hidden) | </div>
<div class="d" style="left:1508px;top:74px;width:274px;height:16px;overflow:hidden;background:#0a246a;color:#fff;padding-left:2px"><span style="word-spacing:-1.3px">2 | ID:1  </span><span style="word-spacing:.35px">Tab values by Zyp free dll | 12 ms | Calc</span></div>
<div class="btn" style="left:1796px;top:56px;width:108px;height:28px;line-height:27px">Move Up</div>
<div class="raised" style="left:1135px;top:340px;width:60px;height:28px"></div>
<div class="raised" style="left:1135px;top:377px;width:60px;height:28px"></div>
<div class="raised" style="left:1135px;top:416px;width:60px;height:28px"></div>
<div class="win" style="left:1138px;top:96px;width:775px;height:613px"></div>
<div class="a" style="left:1141px;top:99px;width:768px;height:18px;background:linear-gradient(90deg,#0a246a,#a6caf0)"></div>
<div class="a" style="left:1143px;top:101px;font-weight:bold;font-size:11.75px;line-height:14px;color:#fff">Study Settings: Tab values by Zyp free dll. ID:1</div>
<div class="raised" style="left:1891px;top:101px;width:16px;height:14px"></div>
<svg class="a" style="left:1891px;top:101px" width="16" height="14"><path d="M4.500 3.500l7 6.500M11.500 3.500l-7 6.500" stroke="#000" stroke-width="1.700" fill="none"/></svg>
<div class="a" style="left:1155px;top:155px;width:740px;height:493px;background:#d4d0c8;box-shadow:inset -1px -1px #404040,inset 1px 1px #fff,inset -2px -2px #808080"></div>
<div class="a" style="left:1282px;top:134px;width:77px;height:21px;background:#d4d0c8;border-radius:2px 2px 0 0;box-shadow:inset 1px 1px #fff,inset -1px 0 #404040,inset -2px 0 #808080"></div>
<div class="d" style="left:1287px;top:137px">Subgraphs</div>
<div class="a" style="left:1359px;top:134px;width:48px;height:21px;background:#d4d0c8;border-radius:2px 2px 0 0;box-shadow:inset 1px 1px #fff,inset -1px 0 #404040,inset -2px 0 #808080"></div>
<div class="d" style="left:1365px;top:137px">Alerts</div>
<div class="a" style="left:1155px;top:132px;width:127px;height:23px;background:#d4d0c8;border-radius:2px 2px 0 0;box-shadow:inset 1px 1px #fff,inset -1px 0 #404040,inset -2px 0 #808080"></div>
<div class="d" style="left:1163px;top:135px">Settings and Inputs</div>
<div class="a" style="left:1156px;top:154px;width:124px;height:2px;background:#d4d0c8"></div>
<div class="d" style="left:1171px;top:193px">Standard Precedence</div>
<div class="d" style="left:1171px;top:219px">Based On:</div>
<div class="sunken" style="left:1171px;top:239px;width:208px;height:23px"></div>
<div class="win" style="left:1361px;top:241px;width:16px;height:19px"></div>
<svg class="a" style="left:1361px;top:241px" width="16" height="19"><polygon points="4.5,7.5 11.5,7.5 8.0,11.5" fill="#000"/></svg>
<div class="d" style="left:1175px;top:242px;width:185px;height:17px;line-height:18px;overflow:hidden">&lt;Main Price Graph&gt;</div>
<div class="d" style="left:1171px;top:271px">Short Name:</div>
<div class="sunken" style="left:1171px;top:291px;width:208px;height:23px"></div>
<div class="d" style="left:1171px;top:323px">Chart Region:</div>
<div class="sunken" style="left:1171px;top:343px;width:98px;height:23px"></div>
<div class="win" style="left:1251px;top:345px;width:16px;height:19px"></div>
<svg class="a" style="left:1251px;top:345px" width="16" height="19"><polygon points="4.5,7.5 11.5,7.5 8.0,11.5" fill="#000"/></svg>
<div class="d" style="left:1175px;top:346px;width:75px;height:17px;line-height:18px;overflow:hidden">1</div>
<div class="btn" style="left:1281px;top:339px;width:98px;height:28px;line-height:27px">Scale</div>
<div class="d" style="left:1171px;top:375px">Value Format:</div>
<div class="sunken" style="left:1171px;top:395px;width:169px;height:23px"></div>
<div class="win" style="left:1322px;top:397px;width:16px;height:19px"></div>
<svg class="a" style="left:1322px;top:397px" width="16" height="19"><polygon points="4.5,7.5 11.5,7.5 8.0,11.5" fill="#000"/></svg>
<div class="d" style="left:1175px;top:398px;width:146px;height:17px;line-height:18px;overflow:hidden">0.01</div>
<div class="cb" style="left:1171px;top:432px"></div>
<div class="d" style="left:1189px;top:430px">Display As Main Price Graph</div>
<div class="cb" style="left:1171px;top:456px"></div>
<div class="d" style="left:1189px;top:454px">Hide Study</div>
<div class="cb" style="left:1171px;top:486px"></div>
<svg class="a" style="left:1171px;top:486px" width="13" height="13"><path d="M3 6l2.500 2.500L10 4" stroke="#000" stroke-width="2" fill="none"/></svg>
<div class="d" style="left:1189px;top:476px">Draw Study Underneath</div>
<div class="d" style="left:1189px;top:492px">Main Price Graph</div>
<div class="cb" style="left:1171px;top:516px"></div>
<div class="d" style="left:1189px;top:514px">Protect with Password</div>
<div class="d" style="left:1171px;top:539px">DLLName.FunctionName</div>
<div class="sunken" style="left:1171px;top:559px;width:140px;height:23px;background:#d4d0c8"></div>
<div class="d" style="left:1174px;top:562px">zyp_64.scsf_tabvalues</div>
<div class="cb" style="left:1171px;top:590px"></div>
<div class="d" style="left:1189px;top:588px">Include in Study Summary</div>
<div class="cb" style="left:1171px;top:614px"></div>
<div class="d" style="left:1189px;top:612px">Include in Spreadsheet</div>
<div class="sunken" style="left:1391px;top:171px;width:490px;height:400px"></div>
<div class="a" style="left:1393px;top:173px;width:279px;height:19px;background:#d4d0c8;box-shadow:inset -1px -1px #505050,inset 1px 1px #e8e6e0"></div>
<div class="a" style="left:1672px;top:173px;width:191px;height:19px;background:#d4d0c8;box-shadow:inset -1px -1px #505050,inset 1px 1px #e8e6e0"></div>
<div class="d" style="left:1399px;top:175px">Input Name</div>
<div class="d" style="left:1679px;top:175px">Input Value</div>
<div class="a" style="left:1393px;top:192px;width:470px;height:361px;overflow:hidden;background:#fff">
<div class="a" style="left:0;top:3px;width:470px;height:17px;border-bottom:1px solid #d8d4cc"></div>
<div class="d" style="left:4px;top:3px;font-size:12.6px;word-spacing:-.5px">Input 10   (In:11)</div>
<div class="d" style="left:286px;top:3px;font-size:12.6px">#3.ID0.SG5</div>
<div class="a" style="left:0;top:20px;width:470px;height:17px;border-bottom:1px solid #d8d4cc"></div>
<div class="d" style="left:4px;top:20px;font-size:12.6px;word-spacing:-.5px">Input 11   (In:12)</div>
<div class="d" style="left:286px;top:20px;font-size:12.6px">#3.ID0.SG4</div>
<div class="a" style="left:0;top:37px;width:470px;height:17px;border-bottom:1px solid #d8d4cc"></div>
<div class="d" style="left:4px;top:37px;font-size:12.6px;word-spacing:-.5px">Input 12   (In:13)</div>
<div class="d" style="left:286px;top:37px;font-size:12.6px">#0.ID0.SG2</div>
<div class="a" style="left:0;top:54px;width:470px;height:17px;border-bottom:1px solid #d8d4cc"></div>
<div class="d" style="left:4px;top:54px;font-size:12.6px;word-spacing:-.5px">Input 13   (In:14)</div>
<div class="d" style="left:286px;top:54px;font-size:12.6px">#0.ID0.SG2</div>
<div class="a" style="left:0;top:71px;width:470px;height:17px;border-bottom:1px solid #d8d4cc"></div>
<div class="d" style="left:4px;top:71px;font-size:12.6px;word-spacing:-.5px">Input 14   (In:15)</div>
<div class="d" style="left:286px;top:71px;font-size:12.6px">#0.ID0.SG2</div>
<div class="a" style="left:0;top:88px;width:470px;height:17px;border-bottom:1px solid #d8d4cc"></div>
<div class="d" style="left:4px;top:88px;font-size:12.6px;word-spacing:-.5px">Input 15   (In:16)</div>
<div class="d" style="left:286px;top:88px;font-size:12.6px">#0.ID0.SG2</div>
<div class="a" style="left:0;top:105px;width:470px;height:17px;border-bottom:1px solid #d8d4cc"></div>
<div class="d" style="left:4px;top:105px;font-size:12.6px;word-spacing:-.5px">Input 16   (In:17)</div>
<div class="d" style="left:286px;top:105px;font-size:12.6px">#0.ID0.SG2</div>
<div class="a" style="left:0;top:122px;width:470px;height:17px;border-bottom:1px solid #d8d4cc"></div>
<div class="d" style="left:4px;top:122px;font-size:12.6px;word-spacing:-.5px">Input 17   (In:18)</div>
<div class="d" style="left:286px;top:122px;font-size:12.6px">#0.ID0.SG2</div>
<div class="a" style="left:0;top:139px;width:470px;height:17px;border-bottom:1px solid #d8d4cc"></div>
<div class="d" style="left:4px;top:139px;font-size:12.6px;word-spacing:-.5px">Input 18   (In:19)</div>
<div class="d" style="left:286px;top:139px;font-size:12.6px">#0.ID0.SG2</div>
<div class="a" style="left:0;top:156px;width:470px;height:17px;border-bottom:1px solid #d8d4cc"></div>
<div class="d" style="left:4px;top:156px;font-size:12.6px;word-spacing:-.5px">Input 19   (In:20)</div>
<div class="d" style="left:286px;top:156px;font-size:12.6px">#0.ID0.SG2</div>
<div class="a" style="left:0;top:173px;width:470px;height:17px;border-bottom:1px solid #d8d4cc"></div>
<div class="d" style="left:4px;top:173px;font-size:12.6px;word-spacing:-.5px">Input 20   (In:21)</div>
<div class="d" style="left:286px;top:173px;font-size:12.6px">#3.ID0.SG11</div>
<div class="a" style="left:0;top:190px;width:470px;height:17px;background:#d4d0c8;border-bottom:1px solid #d8d4cc"></div>
<div class="d" style="left:4px;top:190px;font-size:12.6px;word-spacing:-.5px">Input 21   (In:22)</div>
<div class="d" style="left:286px;top:190px;font-size:12.6px">#3.ID2.SG1</div>
<div class="a" style="left:0;top:207px;width:470px;height:17px;border-bottom:1px solid #d8d4cc"></div>
<div class="d" style="left:4px;top:207px;font-size:12.6px;word-spacing:-.5px">Input 22   (In:23)</div>
<div class="d" style="left:286px;top:207px;font-size:12.6px">#3.ID0.SG10</div>
<div class="a" style="left:0;top:224px;width:470px;height:17px;border-bottom:1px solid #d8d4cc"></div>
<div class="d" style="left:4px;top:224px;font-size:12.6px;word-spacing:-.5px">Input 23   (In:24)</div>
<div class="d" style="left:286px;top:224px;font-size:12.6px">#0.ID0.SG2</div>
<div class="a" style="left:0;top:241px;width:470px;height:17px;border-bottom:1px solid #d8d4cc"></div>
<div class="d" style="left:4px;top:241px;font-size:12.6px;word-spacing:-.5px">Input 24   (In:25)</div>
<div class="d" style="left:286px;top:241px;font-size:12.6px">#0.ID0.SG2</div>
<div class="a" style="left:0;top:258px;width:470px;height:17px;border-bottom:1px solid #d8d4cc"></div>
<div class="d" style="left:4px;top:258px;font-size:12.6px;word-spacing:-.5px">Input 25   (In:26)</div>
<div class="d" style="left:286px;top:258px;font-size:12.6px">#0.ID0.SG2</div>
<div class="a" style="left:0;top:275px;width:470px;height:17px;border-bottom:1px solid #d8d4cc"></div>
<div class="d" style="left:4px;top:275px;font-size:12.6px;word-spacing:-.5px">Input 26   (In:27)</div>
<div class="d" style="left:286px;top:275px;font-size:12.6px">#0.ID0.SG2</div>
<div class="a" style="left:0;top:292px;width:470px;height:17px;border-bottom:1px solid #d8d4cc"></div>
<div class="d" style="left:4px;top:292px;font-size:12.6px;word-spacing:-.5px">Input 27   (In:28)</div>
<div class="d" style="left:286px;top:292px;font-size:12.6px">#0.ID0.SG2</div>
<div class="a" style="left:0;top:309px;width:470px;height:17px;border-bottom:1px solid #d8d4cc"></div>
<div class="d" style="left:4px;top:309px;font-size:12.6px;word-spacing:-.5px">Input 28   (In:29)</div>
<div class="d" style="left:286px;top:309px;font-size:12.6px">#0.ID0.SG2</div>
<div class="a" style="left:0;top:326px;width:470px;height:17px;border-bottom:1px solid #d8d4cc"></div>
<div class="d" style="left:4px;top:326px;font-size:12.6px;word-spacing:-.5px">Input 29   (In:30)</div>
<div class="d" style="left:286px;top:326px;font-size:12.6px">#0.ID0.SG2</div>
<div class="a" style="left:0;top:343px;width:470px;height:17px;border-bottom:1px solid #d8d4cc"></div>
<div class="d" style="left:4px;top:343px;font-size:12.6px;word-spacing:-.5px">Input 30   (In:31)</div>
<div class="d" style="left:286px;top:343px;font-size:12.6px">#0.ID0.SG2</div>
<div class="a" style="left:0;top:2px;width:470px;height:1px;background:#d8d4cc"></div>
<div class="a" style="left:279px;top:0;width:1px;height:361px;background:#d8d4cc"></div>
</div>
<div class="a dither" style="left:1863px;top:173px;width:16px;height:380px"></div>
<div class="win" style="left:1863px;top:173px;width:16px;height:16px"></div>
<svg class="a" style="left:1863px;top:173px" width="16" height="16"><polygon points="4.5,10.0 11.5,10.0 8.0,6.0" fill="#000"/></svg>
<div class="win" style="left:1863px;top:537px;width:16px;height:16px"></div>
<svg class="a" style="left:1863px;top:537px" width="16" height="16"><polygon points="4.5,6.0 11.5,6.0 8.0,10.0" fill="#000"/></svg>
<div class="win" style="left:1863px;top:274px;width:16px;height:177px"></div>
<div class="a dither" style="left:1393px;top:553px;width:470px;height:16px"></div>
<div class="win" style="left:1393px;top:553px;width:16px;height:16px"></div>
<svg class="a" style="left:1393px;top:553px" width="16" height="16"><polygon points="10.0,4.5 10.0,11.5 6.0,8.0" fill="#000"/></svg>
<div class="win" style="left:1847px;top:553px;width:16px;height:16px"></div>
<svg class="a" style="left:1847px;top:553px" width="16" height="16"><polygon points="6.0,4.5 6.0,11.5 10.0,8.0" fill="#000"/></svg>
<div class="win" style="left:1409px;top:553px;width:428px;height:16px"></div>
<div class="a" style="left:1863px;top:553px;width:16px;height:16px;background:#d4d0c8"></div>
<div class="a" style="left:1391px;top:586px;width:489px;height:46px;border:1px solid #808080;box-shadow:1px 1px #fff,inset 1px 1px #fff"></div>
<div class="d" style="left:1397px;top:577px;background:#d4d0c8;padding:0 3px">Input 21</div>
<div class="sunken" style="left:1401px;top:598px;width:143px;height:23px"></div>
<div class="win" style="left:1526px;top:600px;width:16px;height:19px"></div>
<svg class="a" style="left:1526px;top:600px" width="16" height="19"><polygon points="4.5,7.5 11.5,7.5 8.0,11.5" fill="#000"/></svg>
<div class="d" style="left:1405px;top:601px;width:120px;height:17px;line-height:18px;overflow:hidden">F.US.EPU19  1 Min</div>
<div class="sunken" style="left:1553px;top:598px;width:143px;height:23px"></div>
<div class="win" style="left:1678px;top:600px;width:16px;height:19px"></div>
<svg class="a" style="left:1678px;top:600px" width="16" height="19"><polygon points="4.5,7.5 11.5,7.5 8.0,11.5" fill="#000"/></svg>
<div class="d" style="left:1557px;top:601px;width:120px;height:17px;line-height:18px;overflow:hidden">Study Subgraphs Difference</div>
<div class="sunken" style="left:1705px;top:598px;width:143px;height:23px"></div>
<div class="win" style="left:1830px;top:600px;width:16px;height:19px"></div>
<svg class="a" style="left:1830px;top:600px" width="16" height="19"><polygon points="4.5,7.5 11.5,7.5 8.0,11.5" fill="#000"/></svg>
<div class="d" style="left:1708px;top:601px;width:121px;height:17px;line-height:18px;background:#0a246a;color:#fff;overflow:hidden;padding-left:1px">Diff (SG1)</div>
<div class="a" style="left:1155px;top:650px;width:100px;height:28px;background:#000"></div>
<div class="btn" style="left:1156px;top:651px;width:98px;height:26px;line-height:25px">OK</div>
<div class="btn" style="left:1263px;top:650px;width:100px;height:28px;line-height:27px">Cancel</div>
<div class="btn" style="left:1371px;top:650px;width:100px;height:28px;line-height:27px">Apply</div>
<div class="btn" style="left:1479px;top:650px;width:100px;height:28px;line-height:27px">Help</div>
<div class="btn" style="left:1587px;top:650px;width:100px;height:28px;line-height:27px">Description</div>
<div class="btn" style="left:1695px;top:650px;width:116px;height:28px;line-height:27px">Reset Defaults</div>
<div class="cb" style="left:1563px;top:684px"></div>
<div class="d" style="left:1581px;top:682px">Save these settings as the default</div>
</body></html>
